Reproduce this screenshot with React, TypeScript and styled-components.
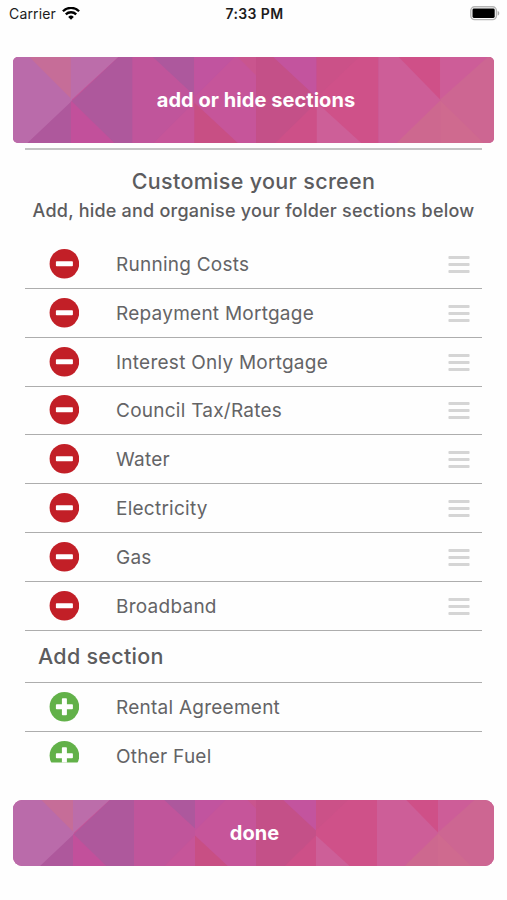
import React from "react";
import styled, { createGlobalStyle } from "styled-components";

const GlobalStyle = createGlobalStyle`
  * { box-sizing: border-box; }
  body { margin: 0; background: #fff; font-family: Inter, "Liberation Sans", sans-serif; }
`;

const Screen = styled.main`
  width: 507px;
  height: 900px;
  overflow: hidden;
  display: flex;
  flex-direction: column;
  background: #fefefe;
  color: #5c5c5e;
`;

const StatusBar = styled.header`
  display: grid;
  grid-template-columns: 1fr auto 1fr;
  align-items: center;
  height: 27px;
  padding: 0 7px 0 9px;
  font-size: 14px;
  color: #1c1c1c;
`;

const Carrier = styled.div`
  display: flex;
  align-items: center;
  gap: 6px;
  letter-spacing: 0.15px;
`;

const Time = styled.time`
  font-weight: 600;
  letter-spacing: 0.4px;
`;

const BatterySlot = styled.div`
  display: flex;
  justify-content: flex-end;
`;

const Banner = styled.button<{ $height: number; $top: number; $radius: number }>`
  display: grid;
  flex: none;
  width: 481px;
  height: ${(p) => p.$height}px;
  margin: ${(p) => p.$top}px 0 0 13px;
  padding: 0;
  border: 0;
  border-radius: ${(p) => p.$radius}px;
  overflow: hidden;
  place-items: center;
  background: #c55498;
  font-family: inherit;
  color: #fff;

  > * { grid-area: 1 / 1; }
`;

const Pattern = styled.svg`
  display: block;
  width: 100%;
  height: 100%;
  min-height: 0;
`;

const BannerLabel = styled.span<{ $indent: number }>`
  padding-left: ${(p) => p.$indent}px;
  font-size: 20px;
  font-weight: 700;
  line-height: 24px;
  letter-spacing: 0.05px;
`;

const Content = styled.section`
  flex: none;
  width: 457px;
  height: 615px;
  margin: 5px 0 0 25px;
  border-top: 2px solid #c4c4c4;
`;

const Intro = styled.div`
  height: 90px;
  padding-top: 17px;
  text-align: center;
  white-space: nowrap;
`;

const Title = styled.h1`
  margin: 0;
  font-size: 21.5px;
  font-weight: 500;
  line-height: 28px;
  letter-spacing: 0.32px;
`;

const Subtitle = styled.p`
  margin: 3px 0 0;
  font-size: 18px;
  font-weight: 500;
  line-height: 26px;
  letter-spacing: 0.22px;
`;

const List = styled.ul`
  margin: 0;
  padding: 0;
  list-style: none;
`;

const RowIcon = styled.svg`
  display: block;
  width: 30px;
  height: 30px;
  margin-left: 24px;
`;

const Row = styled.li<{ $partial?: boolean }>`
  display: grid;
  grid-template-columns: 91px 1fr 34px;
  align-items: center;
  height: 48.85px;
  border-bottom: 1px solid ${(p) => (p.$partial ? "transparent" : "#adadad")};

  ${RowIcon} {
    clip-path: ${(p) => (p.$partial ? "inset(0 0 8px 0)" : "none")};
  }
`;

const RowLabel = styled.span`
  padding-top: 2px;
  font-size: 19px;
  line-height: 24px;
  letter-spacing: 0.25px;
  color: #646466;
`;

const Handle = styled.svg`
  display: block;
  width: 22px;
  height: 20px;
`;

const SectionHeading = styled.h2`
  display: flex;
  align-items: center;
  height: 52px;
  margin: 0;
  padding-left: 13px;
  border-bottom: 1px solid #adadad;
  font-size: 21.5px;
  font-weight: 500;
  letter-spacing: 0.28px;
`;

const facets: [string, string][] = [
  ["0,0 61,0 61,85 0,85", "#ba6baa"],
  ["19,0 60,0 60,41", "#c66d98"],
  ["60,0 107,0 60,43", "#bc6daa"],
  ["107,0 121,0 121,85 17,85", "#ae589c"],
  ["60,43 103,85 60,85", "#c2509b"],
  ["121,0 182,0 182,85 121,85", "#c0559b"],
  ["141,0 182,0 182,38", "#ad589d"],
  ["182,45 182,85 142,85", "#c65599"],
  ["182,0 243,0 243,85 182,85", "#c6559a"],
  ["182,0 222,0 182,40", "#c1549f"],
  ["225,0 243,0 243,18", "#c9558e"],
  ["182,45 225,85 182,85", "#c84f84"],
  ["243,0 303,0 303,85 243,85", "#c45088"],
  ["260,0 303,0 303,40", "#c3549e"],
  ["303,45 303,85 262,85", "#cd5088"],
  ["303,0 364,0 364,85 303,85", "#cf5189"],
  ["303,0 345,0 303,40", "#cb5188"],
  ["303,45 347,85 303,85", "#cd5f98"],
  ["364,0 425,0 425,85 364,85", "#cd5e98"],
  ["384,0 425,0 425,42", "#cf5088"],
  ["425,43 425,85 382,85", "#cd688f"],
  ["425,0 481,0 481,85 425,85", "#cd6692"],
  ["425,0 472,0 425,42", "#cd5d98"],
  ["425,43 468,85 425,85", "#cf6a8f"],
];

const FacetPattern = () => (
  <Pattern viewBox="0 0 481 85" preserveAspectRatio="xMidYMid slice" aria-hidden>
    {facets.map(([points, fill]) => (
      <polygon key={points} points={points} fill={fill} />
    ))}
  </Pattern>
);

const WifiIcon = () => (
  <svg width="18" height="14" viewBox="0 0 18 14" fill="none" stroke="#000" strokeWidth="2.3">
    <path d="M.9 4.2a11.5 11.5 0 0 1 16.2 0" />
    <path d="M3.8 7.4a7.4 7.4 0 0 1 10.4 0" />
    <path d="M6.2 9.9a4 4 0 0 1 5.6 0L9 12.8Z" fill="#000" stroke="none" />
  </svg>
);

const BatteryIcon = () => (
  <svg width="30" height="15" viewBox="0 0 30 15">
    <rect x=".8" y=".8" width="25.6" height="12.8" rx="3.8" fill="#fff" stroke="#b5b5b5" strokeWidth="1.4" />
    <rect x="2.5" y="2.5" width="22.2" height="9.4" rx="1.4" fill="#000" />
    <path d="M27.7 4.9c2.1.6 2.1 4 0 4.6Z" fill="#aaa" />
  </svg>
);

const ToggleIcon = ({ kind }: { kind: "remove" | "add" }) => (
  <RowIcon viewBox="0 0 30 30">
    <circle cx="15.4" cy="14.8" r="14.8" fill={kind === "add" ? "#62b149" : "#c21f27"} />
    <rect x="6.9" y="12.3" width="17" height="5" rx=".8" fill="#fff" />
    {kind === "add" && <rect x="12.9" y="6.3" width="5" height="17" rx=".8" fill="#fff" />}
  </RowIcon>
);

const DragHandle = () => (
  <Handle viewBox="0 0 22 20">
    {[2, 9, 16].map((y) => (
      <rect key={y} x=".4" y={y} width="21.2" height="3" rx="1" fill="#d5d5d5" />
    ))}
  </Handle>
);

const activeSections = [
  "Running Costs",
  "Repayment Mortgage",
  "Interest Only Mortgage",
  "Council Tax/Rates",
  "Water",
  "Electricity",
  "Gas",
  "Broadband",
];

const availableSections = ["Rental Agreement", "Other Fuel"];

export default function App() {
  return (
    <Screen>
      <GlobalStyle />
      <StatusBar>
        <Carrier>
          Carrier <WifiIcon />
        </Carrier>
        <Time>7:33 PM</Time>
        <BatterySlot>
          <BatteryIcon />
        </BatterySlot>
      </StatusBar>
      <Banner $height={86} $top={30} $radius={5}>
        <FacetPattern />
        <BannerLabel $indent={5}>add or hide sections</BannerLabel>
      </Banner>
      <Content>
        <Intro>
          <Title>Customise your screen</Title>
          <Subtitle>Add, hide and organise your folder sections below</Subtitle>
        </Intro>
        <List>
          {activeSections.map((name) => (
            <Row key={name}>
              <ToggleIcon kind="remove" />
              <RowLabel>{name}</RowLabel>
              <DragHandle />
            </Row>
          ))}
        </List>
        <SectionHeading>Add section</SectionHeading>
        <List>
          {availableSections.map((name, index) => (
            <Row key={name} $partial={index === availableSections.length - 1}>
              <ToggleIcon kind="add" />
              <RowLabel>{name}</RowLabel>
            </Row>
          ))}
        </List>
      </Content>
      <Banner $height={66} $top={37} $radius={9}>
        <FacetPattern />
        <BannerLabel $indent={2}>done</BannerLabel>
      </Banner>
    </Screen>
  );
}
